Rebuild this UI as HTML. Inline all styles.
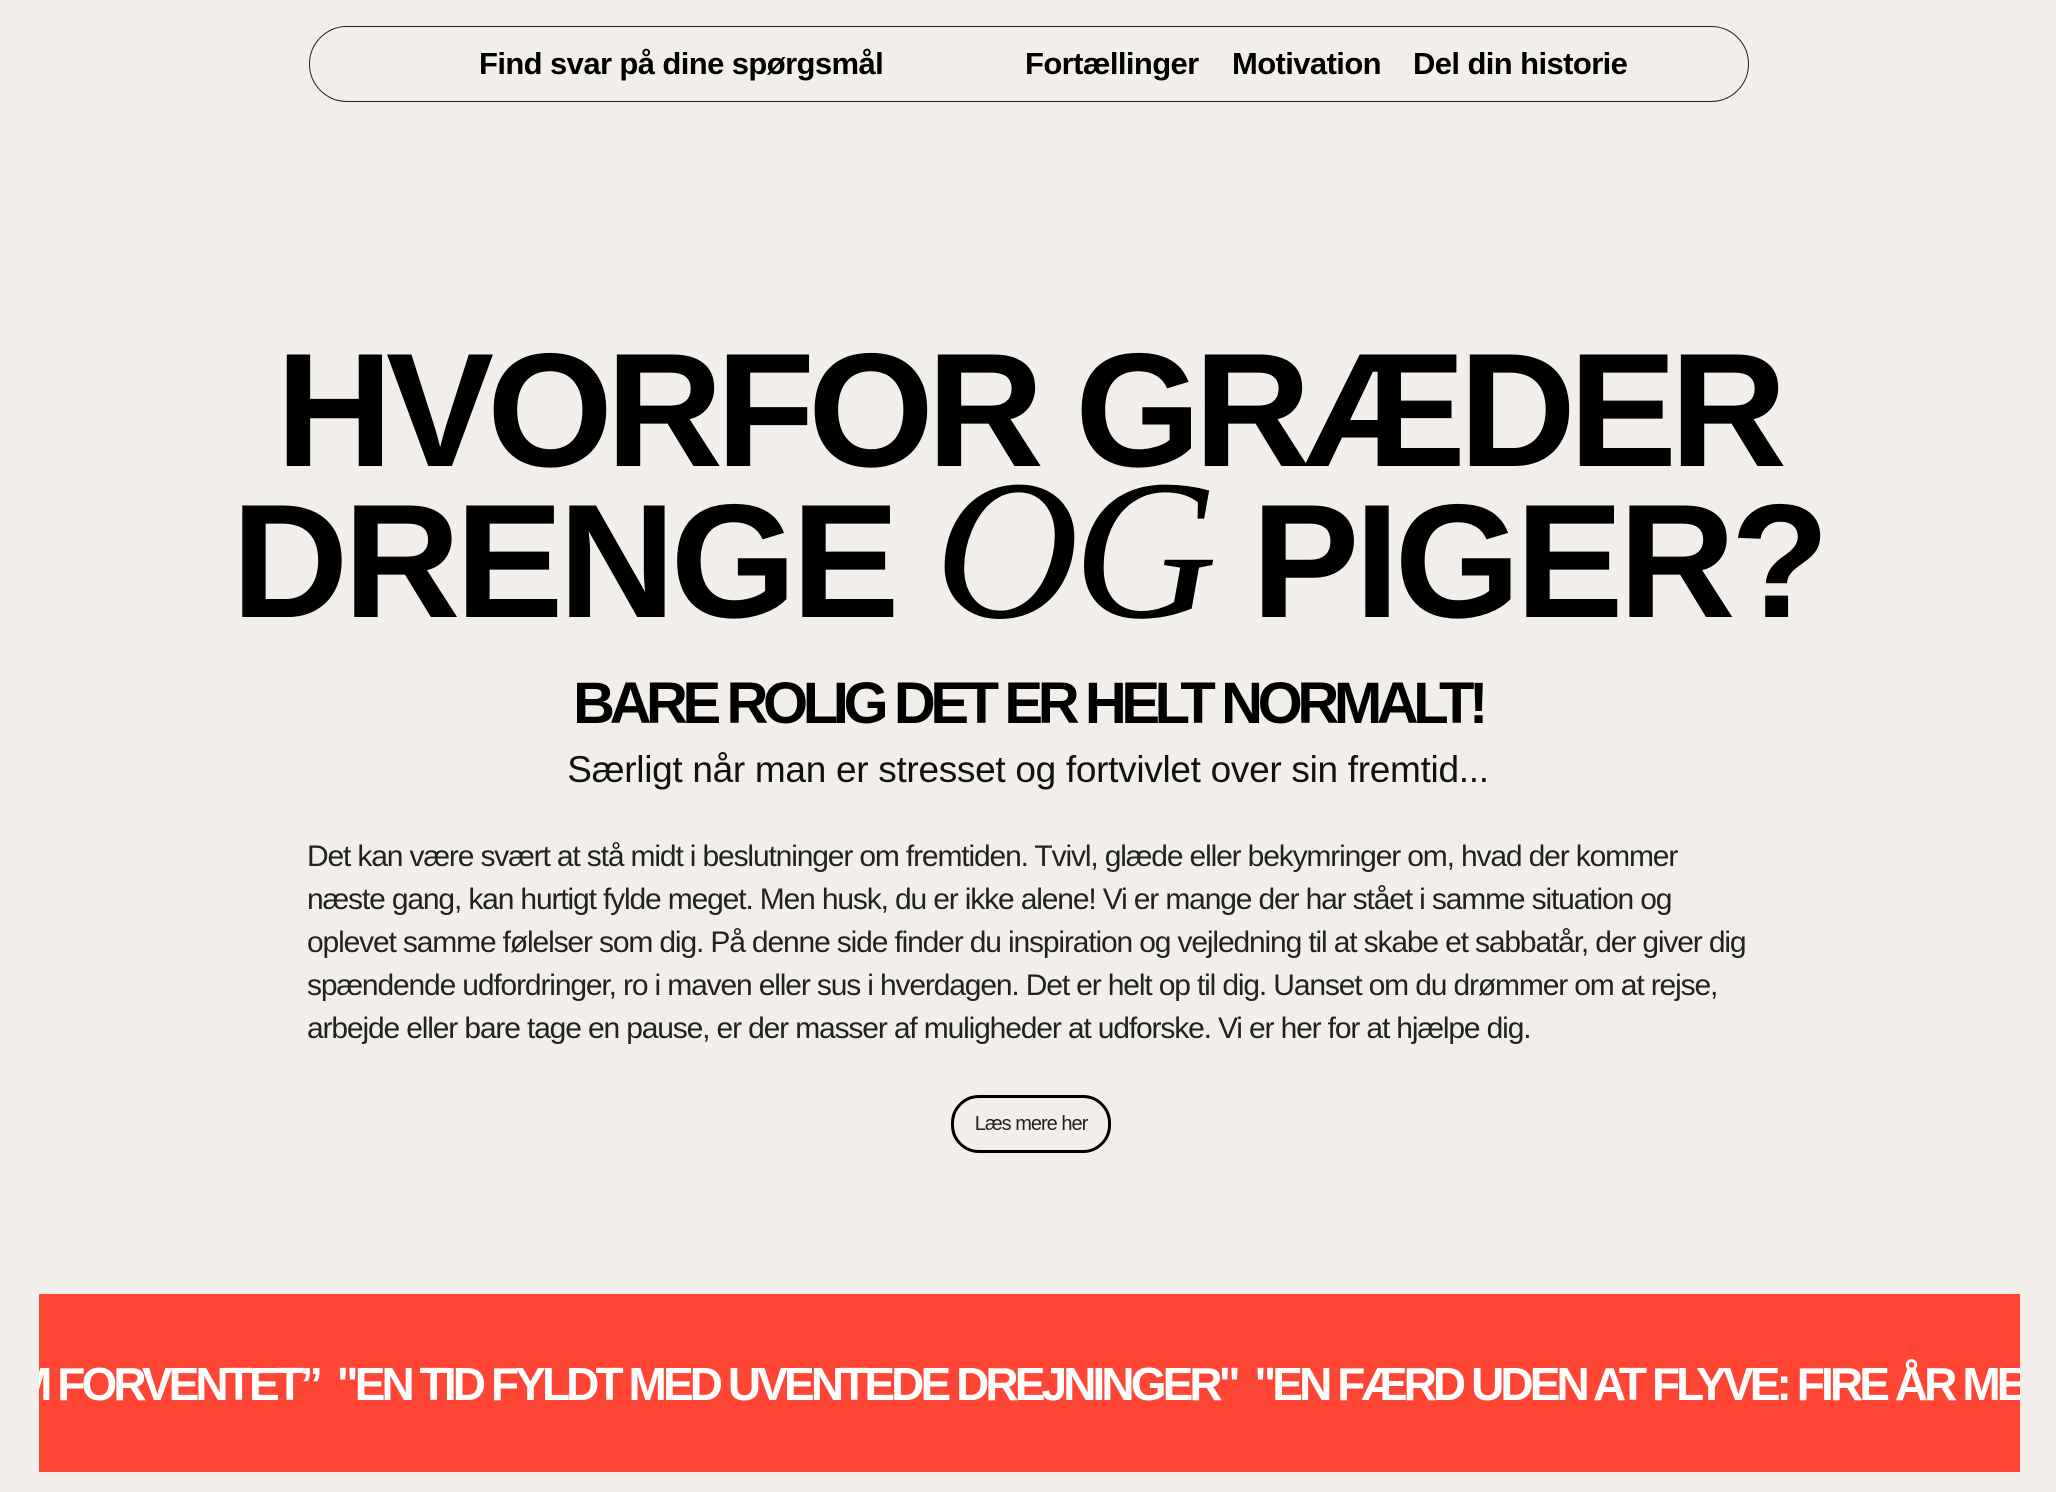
<!DOCTYPE html>
<html><head><meta charset="utf-8"><style>
html,body{margin:0;padding:0;}
body{width:2056px;height:1492px;background:#f2efeb;position:relative;overflow:hidden;font-family:"Liberation Sans",sans-serif;color:#000;}
.nav{position:absolute;left:309px;top:26px;width:1438px;height:74px;border:1.5px solid #222;border-radius:40px;}
.nav span{position:absolute;top:19px;font-weight:bold;font-size:31px;letter-spacing:-0.6px;white-space:nowrap;line-height:36px;}
.h{position:absolute;left:0;width:2056px;text-align:center;font-weight:bold;white-space:nowrap;}
.h1{font-size:162px;letter-spacing:-7px;line-height:1;}
.og{font-family:"Liberation Serif",serif;font-style:italic;font-weight:normal;font-size:200px;letter-spacing:-6px;line-height:0;}
.p{position:absolute;left:307px;font-size:30px;letter-spacing:-1.15px;line-height:43px;color:#222;white-space:nowrap;}
.btn{position:absolute;left:951px;top:1095px;width:154px;height:52px;border:3px solid #000;border-radius:28px;font-size:20px;letter-spacing:-1px;text-align:center;line-height:52px;color:#222;}
.band{position:absolute;left:39px;top:1294px;width:1981px;height:178px;background:#ff4533;overflow:hidden;}
.band div{position:absolute;top:62px;left:-25px;color:#fff;font-weight:bold;font-size:46px;letter-spacing:-3.9px;white-space:nowrap;line-height:56px;}
</style></head><body>
<div class="nav">
<span style="left:169px">Find svar på dine spørgsmål</span>
<span style="left:715px">Fortællinger</span>
<span style="left:922px">Motivation</span>
<span style="left:1103px">Del din historie</span>
</div>
<div class="h h1" style="top:330px">HVORFOR GRÆDER</div>
<div class="h h1" style="top:481px;letter-spacing:-5px">DRENGE <span class="og">OG</span> PIGER?</div>
<div class="h" style="top:672px;font-size:58px;letter-spacing:-5.4px;line-height:64px">BARE ROLIG DET ER HELT NORMALT!</div>
<div class="h" style="top:749px;font-size:37px;font-weight:normal;letter-spacing:-0.3px;line-height:42px;color:#111">Særligt når man er stresset og fortvivlet over sin fremtid...</div>
<div class="p" style="top:835px">Det kan være svært at stå midt i beslutninger om fremtiden. Tvivl, glæde eller bekymringer om, hvad der kommer<br>næste gang, kan hurtigt fylde meget. Men husk, du er ikke alene! Vi er mange der har stået i samme situation og<br>oplevet samme følelser som dig. På denne side finder du inspiration og vejledning til at skabe et sabbatår, der giver dig<br>spændende udfordringer, ro i maven eller sus i hverdagen. Det er helt op til dig. Uanset om du drømmer om at rejse,<br>arbejde eller bare tage en pause, er der masser af muligheder at udforske. Vi er her for at hjælpe dig.</div>
<div class="btn">Læs mere her</div>
<div class="band"><div>M FORVENTET”&nbsp; "EN TID FYLDT MED UVENTEDE DREJNINGER"&nbsp; "EN FÆRD UDEN AT FLYVE: FIRE ÅR MED</div></div>
</body></html>
